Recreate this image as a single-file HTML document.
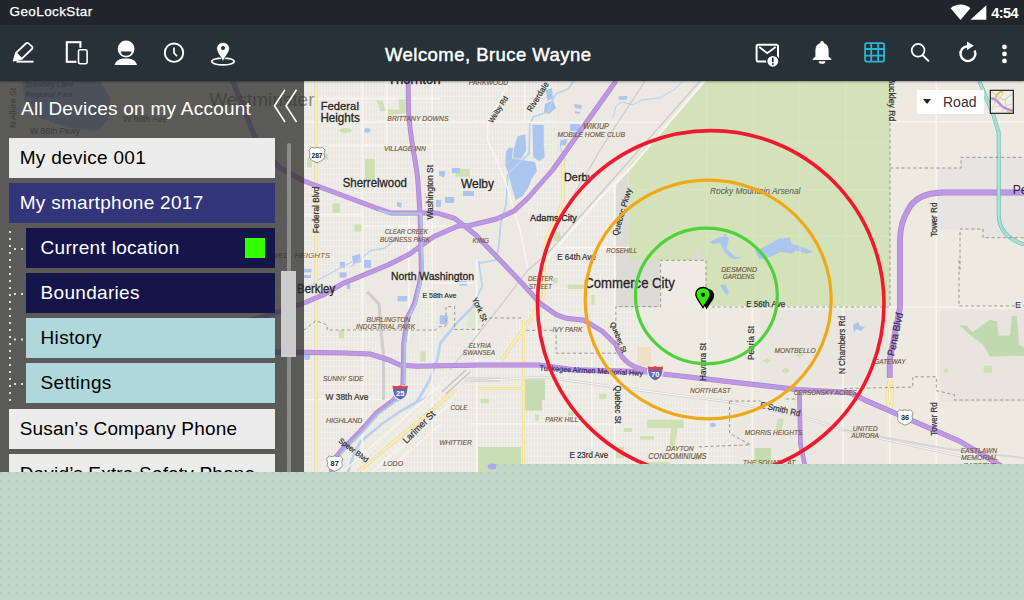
<!DOCTYPE html>
<html lang="en">
<head>
<meta charset="utf-8">
<title>GeoLockStar</title>
<style>
html,body{margin:0;padding:0;}
body{width:1024px;height:600px;overflow:hidden;position:relative;background:#c2d6c7;font-family:"Liberation Sans",sans-serif;}
#map{position:absolute;left:0;top:0;width:1024px;height:472px;display:block;}
#map text{font-family:"Liberation Sans",sans-serif;}
#bottom{position:absolute;left:0;top:464px;width:1024px;height:136px;display:block;}
#statusbar{position:absolute;left:0;top:0;width:1024px;height:25px;background:#1f2529;color:#fff;}
#statusbar .app{position:absolute;left:9.6px;top:4px;font-size:13.5px;line-height:16px;letter-spacing:0.38px;-webkit-text-stroke:0.25px #fff;}
#statusbar .time{position:absolute;right:6px;top:5px;font-size:14.5px;line-height:17px;font-weight:bold;letter-spacing:-0.55px;}
#actionbar{position:absolute;left:0;top:25px;width:1024px;height:56px;background:#263238;color:#fff;box-shadow:0 1px 2px rgba(0,0,0,0.35);}
#actionbar .title{position:absolute;left:0;width:976.5px;top:19px;text-align:center;font-size:18.5px;line-height:22px;-webkit-text-stroke:0.45px #fff;letter-spacing:0.45px;}
#actionbar svg{position:absolute;display:block;}
#sidebar{position:absolute;left:0;top:81px;width:304px;height:391px;background:rgba(45,45,45,0.76);overflow:hidden;}
#sidebar .hdr{position:absolute;left:21px;top:16.5px;font-size:19px;line-height:22px;color:#fff;white-space:nowrap;letter-spacing:0.25px;}
.item{position:absolute;left:9px;width:266px;height:39.6px;font-size:19px;line-height:39px;white-space:nowrap;overflow:hidden;letter-spacing:0.3px;}
.item span{position:absolute;left:10.7px;top:0px;}
.item.sub{left:26px;width:249px;}
.item.sub span{left:14.6px;}
.lt{background:#ececec;color:#000;}
.sel{background:#33357a;color:#fff;}
.navy{background:#15154a;color:#fff;}
.teal{background:#aed8da;color:#000;}
.sq{position:absolute;left:219px;top:10px;width:20px;height:20px;background:#33ff00;}
#track{position:absolute;left:287px;top:62px;width:4px;height:340px;background:#8c8c8c;border-radius:2px 2px 0 0;}
#thumb{position:absolute;left:281px;top:190px;width:15px;height:86px;background:#cccccc;}
#sidebar svg{position:absolute;left:0;top:0;}
#roadsel{position:absolute;left:917px;top:90px;width:67px;height:24px;background:#fff;color:#333;font-size:14px;line-height:24px;}
#roadsel span{position:absolute;left:26px;top:0;}
#roadsel i{position:absolute;left:6px;top:9px;width:0;height:0;border-left:4.6px solid transparent;border-right:4.6px solid transparent;border-top:5.2px solid #222;}
</style>
</head>
<body>
<svg id="map" viewBox="0 0 1024 472">
<rect x="0" y="0" width="1024" height="472" fill="#edeae2"/>
<defs>
<pattern id="grid" x="0" y="0" width="3" height="6" patternUnits="userSpaceOnUse">
<rect width="3" height="6" fill="#ebe8e1"/>
<rect x="0" y="0" width="3" height="1" fill="#f0eee8"/>
<rect x="0" y="0" width="1" height="6" fill="#f0eee8"/>
</pattern>
<pattern id="gridd" x="0" y="0" width="5" height="5" patternUnits="userSpaceOnUse" patternTransform="rotate(-45 420 430)">
<rect width="5" height="5" fill="#ece9e2"/>
<rect x="0" y="0" width="5" height="1.2" fill="#f4f1e6"/>
<rect x="0" y="0" width="1.2" height="5" fill="#f4f1e6"/>
</pattern>
</defs>
<!-- urban grid texture -->
<g id="urban">
<rect x="0" y="81" width="640" height="391" fill="url(#grid)"/>
<polygon points="640,398 735,408 735,472 640,472" fill="url(#grid)"/>
<polygon points="436,200 520,200 545,255 530,300 500,345 436,345" fill="#ece9e2"/>
<polygon points="366,262 420,262 420,350 384,350 366,300" fill="#ece9e2"/>
<rect x="760" y="310" width="128" height="76" fill="#e9e6df"/>
<polygon points="556,81 706,81 629,166 600,192 575,160 556,150" fill="#ece9e2"/>
<rect x="736" y="408" width="150" height="64" fill="#ebe8e1"/>
<rect x="940" y="310" width="84" height="92" fill="#e8e5de"/>
<polygon points="350,472 400,415 440,380 475,372 455,396 425,426 395,472" fill="url(#gridd)"/>
<rect x="637" y="347" width="14" height="19" fill="#f0dfc6"/>
</g>
<!-- landuse -->
<g id="landuse">
<polygon points="706,81 890,81 890,306 706,306 706,260 629,260 629,166" fill="#d4e2b9"/>
<polygon points="616,186 628.5,171 629,260 660,260 660,307 616,307" fill="#dddbd6"/>
<polygon points="690,260 697,250 704,260" fill="#dddbd6"/>
<rect x="660.5" y="260.5" width="45.5" height="46" fill="#eeebe4"/>
<polygon points="937,168 961,168 961,157 1024,157 1024,238 983,238 983,229 937,229" fill="#e7e5e1"/>
<rect x="890" y="81" width="134" height="226" fill="#eeebe5" opacity="0.0"/>
</g>
<g id="parks" fill="#cfe0b3">
<polygon points="376.5,100.2 382.6,101 385.3,110.8 380.9,111.6"/>
<polygon points="398.4,97.6 405.5,97.6 405.5,113.4 387.9,115.2 387.9,109 399.3,109.9"/>
<ellipse cx="345.7" cy="130.5" rx="6.2" ry="2.4"/>
<rect x="365" y="159" width="10" height="21"/>
<rect x="455.6" y="168.8" width="14" height="8"/>
<rect x="307" y="157.3" width="5" height="10"/><rect x="322.9" y="153.8" width="5" height="6.2"/>
<rect x="332.5" y="203.4" width="7.5" height="9.6"/>
<rect x="354.5" y="224.5" width="7" height="7"/>
<rect x="339" y="330.3" width="5" height="8"/>
<rect x="420.4" y="351.4" width="5.3" height="10"/>
<polygon points="468.7,312.7 480,306 484,318 474,330 466,326" fill="#dde8d0"/>
<rect x="553.5" y="231.5" width="7" height="9.7"/>
<rect x="567.6" y="284.6" width="17.4" height="4.4"/>
<rect x="591.3" y="295" width="3.2" height="9.8"/>
<ellipse cx="555.3" cy="280.6" rx="2.7" ry="3"/>
<polygon points="525.2,379.2 545,379.2 545,400 541.9,400 541.9,410.4 525.2,410.4" fill="#c5dbb0"/>
<polygon points="478.3,446.9 521,446.9 521,472 478.3,472" fill="#c9deb4"/>
<rect x="480.4" y="399" width="8.4" height="4"/><rect x="535" y="414.6" width="3.8" height="6.2"/><rect x="599.2" y="393.75" width="7.3" height="5.3"/><rect x="567.9" y="411.5" width="5.2" height="4.1"/><rect x="615.8" y="446.9" width="8.4" height="11.4"/><rect x="624" y="428" width="8" height="4"/>
<polygon points="647.3,419.8 683.75,419.8 683.75,428 677.5,428 674.4,448 669,448 671,428 647.3,428"/>
<rect x="754.6" y="448" width="16.4" height="24" fill="#c5dbb0"/>
<polygon points="767,357.5 771,360.4 767,363.5 763,360.4"/><polygon points="785.8,367.5 790,370.8 785.8,374 781.6,370.8"/><polygon points="800,352 804,355 800,358 796,355"/>
<polygon points="777.5,418.75 783.75,418.75 781.7,430 775.4,430"/>
<polygon points="959,325 967,326 972.3,332 990,319.8 997,321.5 998.7,335.6 1010,335.6 1011.9,316.2 1017,316 1018.9,344.4 1024,347 1024,356 1012.7,355.8 990,356.7 982.9,344.4 970.6,335.6" fill="#c1d9af"/>
<rect x="983.6" y="365.6" width="8.4" height="7.4"/><rect x="944" y="368.75" width="4" height="3.5"/>
<rect x="640" y="436" width="14" height="3.5"/><rect x="640" y="462" width="30" height="4"/>
<rect x="694" y="455" width="6" height="5"/>
</g>

<g id="water" fill="#abc6ee">
<polygon points="546,90 552,88 553,98 547,101"/>
<polygon points="545,104 553,100 556,108 549,114 544,112"/>
<polygon points="532.4,124.8 543.8,124.8 543.8,145 544.7,157.3 539.4,160.9 533.3,157.3"/>
<polygon points="517.5,136.2 525.4,134.5 526.2,150.3 521,159.1 513,157.3 514,148.5"/>
<polygon points="508.7,147.7 513,148 512,159 505.2,164.4 506,152"/>
<polygon points="505,165 513,158 522,160 535,162 537,171 531.5,179 528,188 522.7,196 515.7,200 512,188 508,172"/>
<polygon points="574,104 582,105 581,109 575,108"/>
<polygon points="575,111 580,112 579,114 575,113"/>
<polygon points="570.2,124 579.9,124 580,131 570,131"/>
<polygon points="560.5,139.8 567.6,139 566,145 560,146"/>
<polygon points="618.5,96.2 627.3,96 627,99.5 619,100"/>
<polygon points="709.4,241.9 721.3,236.5 725.6,233.2 728.9,238.7 726.7,248.4 735.4,257 741.9,257 735.4,259.3 731,258.2 723.4,250.6 720.2,243 712.6,244"/>
<polygon points="754.9,250.6 765.7,246.2 778.7,238.7 789.5,237.6 791.7,244 800.4,246.2 813.4,251.7 806.9,253.8 796,250.6 791.7,253.8 780.9,251.7 770,257 759.2,259.3"/>
<polygon points="720.2,285.3 725.6,284.2 728.9,292.9 726.7,295 722.4,289.6"/>
<polygon points="853,325 858,322 860,326 865,327 861,331 857,329 854,332"/>
<polygon points="397,202 402,203 401,208 397,206"/>
<rect x="436" y="200" width="5" height="7"/><rect x="445" y="197" width="9" height="6"/><rect x="463" y="191" width="11" height="5"/><rect x="439" y="171" width="6" height="5"/><rect x="452" y="168" width="8" height="5"/>
<polygon points="352,256 360,254 361,262 353,264"/><rect x="364" y="260" width="7" height="8"/><rect x="340" y="262" width="5" height="6"/>
<rect x="303.5" y="268.8" width="8" height="3.5"/><rect x="304" y="275" width="7" height="3"/><rect x="339.5" y="272.3" width="7" height="5.3"/><rect x="346.6" y="283.7" width="3.5" height="5.3"/><rect x="365" y="261.8" width="4.4" height="6"/><rect x="397.6" y="296" width="9.6" height="5.3"/><rect x="459" y="281" width="8" height="4.5"/><rect x="439.7" y="315.4" width="8" height="8.8"/>
<rect x="364.2" y="128.3" width="6" height="4.4" rx="2"/><rect x="440.6" y="171.4" width="4.5" height="5.5" rx="2"/>
<rect x="709.8" y="423" width="6.2" height="4" rx="2"/>
<ellipse cx="492.5" cy="466.5" rx="5" ry="3" fill="#a9a9f0"/>
<rect x="304" y="352" width="6" height="8" rx="2"/>
</g>
<g id="river" fill="none" stroke="#b9d0f0" stroke-width="1.7" stroke-linejoin="round">
<path d="M573.7,81 L568.4,88.8 L556,94 L550.9,102.9 L549,111.6 L533.3,117 L529.8,124 L529,153.8 L510.4,171.4 L507.8,175 L506,205 L500.8,222.7 L499,243.8 L496.4,259.6 L480.5,263 L478.8,262 L482.3,286.4 L475.3,300.4 L470,311"/>
<path d="M475.8,304 L458.2,321.5 L440.6,342.6 L437.1,360 L429.2,381 L416.7,402 L400,411.5 L383.3,423 L360.4,441.7 L354,454 L348,472" stroke-width="2.6"/>
<path d="M400,411.5 L433.3,393.75"/>
<path d="M351,266.7 L370.3,250.9 L384.4,248.2 L398.4,236.8" stroke-width="1.2"/>
<path d="M304,290 L318,280 L340,268 L352,262" stroke-width="1.2"/>
<path d="M683,81 L675,89 L660,98 L642,100 L633,105 L622,102 L616,106 L613,118" stroke-width="1"/>
<path d="M560,146 L565,160 L562,170" stroke-width="1"/>
</g>
<polygon points="22,81 100,81 110,98 109,118 98,131 70,128 40,118 25,105" fill="#a9c5ee"/>

<g id="minor" fill="none" stroke="#f8f6ee" stroke-width="1.6">
<path d="M362.4,81 V472 M386.7,81 V145 M409,213 V340 M432.2,81 V472 M476.7,260 V472 M524.8,81 V122 M591.9,350 V472 M614.5,185 V472 M706.75,307 V472 M752.4,307 V472 M843,307 V472 M889.8,378 V472 M936.3,81 V472"/>
<path d="M304,98.5 H440 M304,122.2 H660 M304,145.4 H432 M304,214.5 H362 M362,226 H470 M706,307 H1024 M470,424 H620 M545,247.6 H629 M304,399.5 H400 M432,283 H476 M890,121.8 H1024"/>
<path d="M704.5,81 L627,172 L600,198 L560,244 L540,268" stroke-width="2"/>
<path d="M707,81 V260 M754,81 V306 M800,81 V306 M846,81 V306 M650,144 H890 M630,190 H890 M706,236 H890" stroke="#dbe7c4" stroke-width="0.8"/>
<path d="M372,472 L450,404 M345,470 L440,386 M386,472 L441,424" stroke-width="1.4"/>
<path d="M510,81 L487.6,122 L487.6,140 L505,180 L520,230 L528,270"/>
</g>
<g id="arterial" fill="none" stroke-linejoin="round">
<g stroke="#e9d89a" stroke-width="3.2">
<path d="M316.2,81 V472"/>
<path d="M563,160 L563,200 L558,214 L545.6,240 L543.8,270 L543.8,295 L531.5,318 L501.6,360"/>
<path d="M523.6,320 V472 M478,388.5 H523"/>
<path d="M358,472 L455.6,390"/>
<path d="M889.8,380 C886.4,388 886.4,400 889.4,410 M889.8,380 C893.2,388 893.2,400 890.2,410"/>
</g>
<g stroke="#fbf0b4" stroke-width="1.9">
<path d="M316.2,81 V472"/>
<path d="M563,160 L563,200 L558,214 L545.6,240 L543.8,270 L543.8,295 L531.5,318 L501.6,360"/>
<path d="M523.6,320 V472 M478,388.5 H523"/>
<path d="M358,472 L455.6,390"/>
<path d="M889.8,380 C886.4,388 886.4,400 889.4,410 M889.8,380 C893.2,388 893.2,400 890.2,410"/>
</g>
</g>

<g id="rail" fill="none" stroke="#cbc9ca" stroke-width="1.2">
<path d="M645,81 L600,150 L591,166 L570,200"/>
<path d="M700,81 L600,194 L547,254 L528,270 L505,300 L450,370"/>
<path d="M367,291.6 L379,304 L381,330 L383.5,355 L383.5,400" stroke-width="3" stroke="#cfcdcd"/>
<path d="M470,381 L543,377 L650,391.7 L729.6,402 L802.5,416.7 L850,432 L1024,470" stroke="#d2d0cf" stroke-width="2.4"/>
<path d="M470,381 L543,377 L650,391.7 L729.6,402 L802.5,416.7 L850,432 L1024,470" stroke="#f7f5f0" stroke-width="1.2"/>
<path d="M844,430 L948,449 L1024,458" stroke="#d8d6d2" stroke-width="2"/>
<path d="M442,392 L466,370 M446,394 L470,372" stroke="#c6c5ca" stroke-width="1.6"/>
<path d="M462,378 H500 M464,381 H500" stroke="#d0cfd2" stroke-width="1"/>
</g>

<g id="hwy" fill="none" stroke-linejoin="round" stroke-linecap="butt">
<g stroke="#a883cf">
<path d="M408.1,81 L408.5,110 C410,140 416,160 417.8,180 L420,213 L421.3,270 L419.5,283 L414.3,304 L407.2,318 L403.7,344 L403,384 L400.4,391 L393.7,400 L377,412.5 L358.3,433.3 L341.7,450 L335.4,458 L331,472" stroke-width="4.9"/>
<path d="M231.6,78 L246.4,115.6 L258,145 L280,168 L304,181 L375.6,207.8 L391.4,213 L437,213 L454.7,218.3 L475.8,235 L499.9,260 L522.7,284 L540.3,303.6 L556,314.6 L566,318.3 L584.3,320.3 L602,331 L615.9,344.4 C620,357 628,365 640,368.5 L652,372" stroke-width="4.9"/>
<path d="M615.9,81 L552.6,170 L528,198 L514,211 L496.4,219 L470,225.4 L458,226 L433.6,236.8 L409,254.4 L388,265 L370.3,272.3 L344,282.9 L322.9,295 L304,303 L260,318 L200,330" stroke-width="4.9"/>
<path d="M200,351 L304,352.3 L344,353 L370,354 L387.5,359.4 L400,365 L416.7,366.25 L480,365 L538.75,365 L574,369.8 L615.8,370.8 L650,372 L663,374 L752.5,384.4 L798.3,389.6 L850,392.7 L864.8,400 L912.75,420.8 L960.7,441.7 L998,464 L1010,472" stroke-width="5.2"/>
<path d="M799.4,390 L800.4,443.75 L804.6,464 L806,472" stroke-width="4.6"/>
<path d="M1024,192.5 L942.4,192.5 C925,193 914,198 908,210 C902,220 900,228 900,240 L900,307.5 L889.7,360 L889.8,378" stroke-width="5.8"/>
</g>
<g stroke="#be98e2">
<path d="M408.1,81 L408.5,110 C410,140 416,160 417.8,180 L420,213 L421.3,270 L419.5,283 L414.3,304 L407.2,318 L403.7,344 L403,384 L400.4,391 L393.7,400 L377,412.5 L358.3,433.3 L341.7,450 L335.4,458 L331,472" stroke-width="3.6"/>
<path d="M231.6,78 L246.4,115.6 L258,145 L280,168 L304,181 L375.6,207.8 L391.4,213 L437,213 L454.7,218.3 L475.8,235 L499.9,260 L522.7,284 L540.3,303.6 L556,314.6 L566,318.3 L584.3,320.3 L602,331 L615.9,344.4 C620,357 628,365 640,368.5 L652,372" stroke-width="3.6"/>
<path d="M615.9,81 L552.6,170 L528,198 L514,211 L496.4,219 L470,225.4 L458,226 L433.6,236.8 L409,254.4 L388,265 L370.3,272.3 L344,282.9 L322.9,295 L304,303 L260,318 L200,330" stroke-width="3.6"/>
<path d="M200,351 L304,352.3 L344,353 L370,354 L387.5,359.4 L400,365 L416.7,366.25 L480,365 L538.75,365 L574,369.8 L615.8,370.8 L650,372 L663,374 L752.5,384.4 L798.3,389.6 L850,392.7 L864.8,400 L912.75,420.8 L960.7,441.7 L998,464 L1010,472" stroke-width="4"/>
<path d="M799.4,390 L800.4,443.75 L804.6,464 L806,472" stroke-width="3.4"/>
<path d="M1024,192.5 L942.4,192.5 C925,193 914,198 908,210 C902,220 900,228 900,240 L900,307.5 L889.7,360 L889.8,378" stroke-width="4.4"/>
</g>
<!-- teal HOV / toll -->
<path d="M378,210.6 L391.4,213.6 L421,213.6 L422.5,270 L420.7,283 L415.5,304 L408.4,318 L404.9,344 L404.4,384" stroke="#a6cbe0" stroke-width="2"/>
<path d="M404.4,398 L395.2,401.5 L378.5,414 L359.8,434.8 L343.2,451.5 L337,459.5" stroke="#a6cbe0" stroke-width="2"/>
<path d="M979.3,81 L993.4,115 L998.7,132.7 L998.7,214 C999,228 1005,238 1024,244.7" stroke="#74bdb0" stroke-width="4"/>
<path d="M979.3,81 L993.4,115 L998.7,132.7 L998.7,214 C999,228 1005,238 1024,244.7" stroke="#a6e3d6" stroke-width="2.6"/>
</g>

<g id="dash" fill="none" stroke="#8f8e88" stroke-width="0.9" stroke-dasharray="3.2 2.6">
<path d="M304,330 L315.8,320.6 L327.2,325 L327.2,330 L435.4,330 L438.9,326.8 L445.9,326 L445.9,306.6 L454.7,306.6 L454.7,329.4 L480,329.4 L487.6,318 L522.7,318"/>
<path d="M526.2,330.3 L556.1,330.3 L556.1,353.2 L615.9,353.2 L615.9,306.6 L660.6,306.6 L660.6,260.3 L706,260.3 L706,307 L890,307 L890,81"/>
<path d="M844,307 M959,260 L959,306 L1024,306"/>
<path d="M890,168 L961,168 L961,157.3 L1024,157.3"/>
<path d="M960,270 L960,229 L983,229 L983,237.7 L1024,237.7"/>
<path d="M729.6,401 L760.8,401 M729.6,401 L729.6,433.3 L750.4,444.8 L696.25,446.9 M785.8,399 L798.3,399"/>
<path d="M844,388.5 L912.75,387 L912.75,376.8 L936.3,376.8 L936.3,390.6 L954.4,394.8 L954.4,400 L1024,400"/>
</g>

<g id="labels">
<text x="414.2" y="83.9" font-size="13.83" textLength="52.7" lengthAdjust="spacingAndGlyphs" text-anchor="middle" stroke="#262626" stroke-width="0.3" fill="#262626">Thornton</text>
<text x="339.8" y="109.9" font-size="11.83" textLength="38.2" lengthAdjust="spacingAndGlyphs" text-anchor="middle" stroke="#262626" stroke-width="0.3" fill="#262626">Federal</text>
<text x="340.1" y="122.2" font-size="12.20" textLength="39.4" lengthAdjust="spacingAndGlyphs" text-anchor="middle" stroke="#262626" stroke-width="0.3" fill="#262626">Heights</text>
<text x="417.9" y="120.8" font-size="7.77" textLength="61.1" lengthAdjust="spacingAndGlyphs" font-style="italic" text-anchor="middle" stroke="#73573d" stroke-width="0.15" fill="#73573d">BRITTANY DOWNS</text>
<text x="404.9" y="150.7" font-size="7.74" textLength="41.9" lengthAdjust="spacingAndGlyphs" font-style="italic" text-anchor="middle" stroke="#73573d" stroke-width="0.15" fill="#73573d">VILLAGE INN</text>
<text x="374.8" y="186.7" font-size="12.01" textLength="64.2" lengthAdjust="spacingAndGlyphs" text-anchor="middle" stroke="#262626" stroke-width="0.3" fill="#262626">Sherrelwood</text>
<text x="477.5" y="188.3" font-size="12.55" textLength="33.0" lengthAdjust="spacingAndGlyphs" text-anchor="middle" stroke="#262626" stroke-width="0.3" fill="#262626">Welby</text>
<text x="406.4" y="234.2" font-size="6.96" textLength="43.1" lengthAdjust="spacingAndGlyphs" font-style="italic" text-anchor="middle" stroke="#73573d" stroke-width="0.15" fill="#73573d">CLEAR CREEK</text>
<text x="405.0" y="241.5" font-size="7.14" textLength="50.0" lengthAdjust="spacingAndGlyphs" font-style="italic" text-anchor="middle" stroke="#73573d" stroke-width="0.15" fill="#73573d">BUSINESS PARK</text>
<text x="480.8" y="243.0" font-size="7.65" textLength="16.4" lengthAdjust="spacingAndGlyphs" font-style="italic" text-anchor="middle" stroke="#73573d" stroke-width="0.15" fill="#73573d">KING</text>
<text x="316.1" y="292.5" font-size="12.03" textLength="38.2" lengthAdjust="spacingAndGlyphs" text-anchor="middle" stroke="#262626" stroke-width="0.3" fill="#262626">Berkley</text>
<text x="432.5" y="280.2" font-size="10.94" textLength="83.0" lengthAdjust="spacingAndGlyphs" text-anchor="middle" stroke="#262626" stroke-width="0.3" fill="#262626">North Washington</text>
<text x="439.4" y="297.8" font-size="7.46" textLength="33.9" lengthAdjust="spacingAndGlyphs" text-anchor="middle" stroke="#2e2e2e" stroke-width="0.2" fill="#2e2e2e">E 58th Ave</text>
<text x="388.4" y="321.9" font-size="7.67" textLength="44.0" lengthAdjust="spacingAndGlyphs" font-style="italic" text-anchor="middle" stroke="#73573d" stroke-width="0.15" fill="#73573d">BURLINGTON</text>
<text x="385.5" y="328.9" font-size="7.62" textLength="59.2" lengthAdjust="spacingAndGlyphs" font-style="italic" text-anchor="middle" stroke="#73573d" stroke-width="0.15" fill="#73573d">INDUSTRIAL PARK</text>
<text x="479.9" y="348.0" font-size="7.30" textLength="22.2" lengthAdjust="spacingAndGlyphs" font-style="italic" text-anchor="middle" stroke="#73573d" stroke-width="0.15" fill="#73573d">ELYRIA</text>
<text x="479.0" y="355.4" font-size="7.39" textLength="32.3" lengthAdjust="spacingAndGlyphs" font-style="italic" text-anchor="middle" stroke="#73573d" stroke-width="0.15" fill="#73573d">SWANSEA</text>
<text x="343.2" y="381.2" font-size="7.59" textLength="40.6" lengthAdjust="spacingAndGlyphs" font-style="italic" text-anchor="middle" stroke="#73573d" stroke-width="0.15" fill="#73573d">SUNNY SIDE</text>
<text x="346.9" y="399.6" font-size="8.92" textLength="42.9" lengthAdjust="spacingAndGlyphs" text-anchor="middle" stroke="#2e2e2e" stroke-width="0.2" fill="#2e2e2e">W 38th Ave</text>
<text x="344.2" y="423.3" font-size="8.05" textLength="36.5" lengthAdjust="spacingAndGlyphs" font-style="italic" text-anchor="middle" stroke="#73573d" stroke-width="0.15" fill="#73573d">HIGHLAND</text>
<text x="458.9" y="409.8" font-size="7.07" textLength="16.9" lengthAdjust="spacingAndGlyphs" font-style="italic" text-anchor="middle" stroke="#73573d" stroke-width="0.15" fill="#73573d">COLE</text>
<text x="455.5" y="444.8" font-size="7.71" textLength="32.7" lengthAdjust="spacingAndGlyphs" font-style="italic" text-anchor="middle" stroke="#73573d" stroke-width="0.15" fill="#73573d">WHITTIER</text>
<text x="393.2" y="465.6" font-size="7.96" textLength="19.8" lengthAdjust="spacingAndGlyphs" font-style="italic" text-anchor="middle" stroke="#73573d" stroke-width="0.15" fill="#73573d">LODO</text>
<text x="488.4" y="85.3" font-size="7.61" textLength="39.2" lengthAdjust="spacingAndGlyphs" font-style="italic" text-anchor="middle" stroke="#73573d" stroke-width="0.15" fill="#73573d">PARKWOOD</text>
<text x="596.1" y="129.2" font-size="8.18" textLength="25.5" lengthAdjust="spacingAndGlyphs" font-style="italic" text-anchor="middle" stroke="#73573d" stroke-width="0.15" fill="#73573d">WIKIUP</text>
<text x="591.2" y="137.1" font-size="7.70" textLength="67.6" lengthAdjust="spacingAndGlyphs" font-style="italic" text-anchor="middle" stroke="#73573d" stroke-width="0.15" fill="#73573d">MOBILE HOME CLUB</text>
<text x="578.5" y="181.4" font-size="11.42" textLength="29.0" lengthAdjust="spacingAndGlyphs" text-anchor="middle" stroke="#262626" stroke-width="0.3" fill="#262626">Derby</text>
<text x="553.5" y="220.6" font-size="9.61" textLength="46.8" lengthAdjust="spacingAndGlyphs" text-anchor="middle" stroke="#262626" stroke-width="0.3" fill="#262626">Adams City</text>
<text x="576.5" y="260.0" font-size="8.43" textLength="38.3" lengthAdjust="spacingAndGlyphs" text-anchor="middle" stroke="#2e2e2e" stroke-width="0.2" fill="#2e2e2e">E 64th Ave</text>
<text x="621.6" y="253.0" font-size="7.10" textLength="30.8" lengthAdjust="spacingAndGlyphs" font-style="italic" text-anchor="middle" stroke="#73573d" stroke-width="0.15" fill="#73573d">ROSEHILL</text>
<text x="540.5" y="281.1" font-size="7.03" textLength="25.0" lengthAdjust="spacingAndGlyphs" font-style="italic" text-anchor="middle" stroke="#73573d" stroke-width="0.15" fill="#73573d">DEXTER</text>
<text x="540.3" y="288.5" font-size="6.59" textLength="22.8" lengthAdjust="spacingAndGlyphs" font-style="italic" text-anchor="middle" stroke="#73573d" stroke-width="0.15" fill="#73573d">STREET</text>
<text x="567.5" y="332.4" font-size="7.54" textLength="29.9" lengthAdjust="spacingAndGlyphs" font-style="italic" text-anchor="middle" stroke="#73573d" stroke-width="0.15" fill="#73573d">IVY PARK</text>
<text x="629.5" y="288.1" font-size="13.78" textLength="90.4" lengthAdjust="spacingAndGlyphs" text-anchor="middle" stroke="#262626" stroke-width="0.3" fill="#262626">Commerce City</text>
<text x="561.8" y="421.9" font-size="7.44" textLength="32.9" lengthAdjust="spacingAndGlyphs" font-style="italic" text-anchor="middle" stroke="#73573d" stroke-width="0.15" fill="#73573d">PARK HILL</text>
<text x="588.8" y="458.3" font-size="8.42" textLength="38.7" lengthAdjust="spacingAndGlyphs" text-anchor="middle" stroke="#2e2e2e" stroke-width="0.2" fill="#2e2e2e">E 23rd Ave</text>
<text x="739.1" y="271.6" font-size="7.96" textLength="35.7" lengthAdjust="spacingAndGlyphs" font-style="italic" text-anchor="middle" stroke="#73573d" stroke-width="0.15" fill="#73573d">DESMOND</text>
<text x="738.6" y="278.8" font-size="7.28" textLength="31.6" lengthAdjust="spacingAndGlyphs" font-style="italic" text-anchor="middle" stroke="#73573d" stroke-width="0.15" fill="#73573d">GARDENS</text>
<text x="765.7" y="307.4" font-size="8.58" textLength="39.0" lengthAdjust="spacingAndGlyphs" text-anchor="middle" stroke="#2e2e2e" stroke-width="0.2" fill="#2e2e2e">E 56th Ave</text>
<text x="795.0" y="352.9" font-size="7.62" textLength="41.2" lengthAdjust="spacingAndGlyphs" font-style="italic" text-anchor="middle" stroke="#73573d" stroke-width="0.15" fill="#73573d">MONTBELLO</text>
<text x="755.2" y="193.6" font-size="9.22" textLength="90.5" lengthAdjust="spacingAndGlyphs" font-style="italic" text-anchor="middle" stroke="#5f6360" stroke-width="0.1" fill="#5f6360">Rocky Mountain Arsenal</text>
<text x="710.3" y="393.1" font-size="7.53" textLength="40.6" lengthAdjust="spacingAndGlyphs" font-style="italic" text-anchor="middle" stroke="#73573d" stroke-width="0.15" fill="#73573d">NORTHEAST</text>
<text x="773.6" y="435.4" font-size="7.54" textLength="57.7" lengthAdjust="spacingAndGlyphs" font-style="italic" text-anchor="middle" stroke="#73573d" stroke-width="0.15" fill="#73573d">MORRIS HEIGHTS</text>
<text x="679.9" y="451.0" font-size="7.76" textLength="27.8" lengthAdjust="spacingAndGlyphs" font-style="italic" text-anchor="middle" stroke="#73573d" stroke-width="0.15" fill="#73573d">DAYTON</text>
<text x="677.5" y="458.8" font-size="8.27" textLength="58.4" lengthAdjust="spacingAndGlyphs" font-style="italic" text-anchor="middle" stroke="#73573d" stroke-width="0.15" fill="#73573d">CONDOMINIUMS</text>
<text x="769.1" y="465.0" font-size="7.49" textLength="52.2" lengthAdjust="spacingAndGlyphs" font-style="italic" text-anchor="middle" stroke="#73573d" stroke-width="0.15" fill="#73573d">THE SQUARE AT</text>
<text x="825.2" y="394.9" font-size="7.22" textLength="63.0" lengthAdjust="spacingAndGlyphs" font-style="italic" text-anchor="middle" stroke="#73573d" stroke-width="0.15" fill="#73573d">CERSONSKY ACRES</text>
<text x="889.9" y="363.7" font-size="7.36" textLength="31.2" lengthAdjust="spacingAndGlyphs" font-style="italic" text-anchor="middle" stroke="#73573d" stroke-width="0.15" fill="#73573d">GATEWAY</text>
<text x="865.2" y="430.8" font-size="7.66" textLength="25.0" lengthAdjust="spacingAndGlyphs" font-style="italic" text-anchor="middle" stroke="#73573d" stroke-width="0.15" fill="#73573d">UNITED</text>
<text x="865.1" y="438.1" font-size="7.38" textLength="27.7" lengthAdjust="spacingAndGlyphs" font-style="italic" text-anchor="middle" stroke="#73573d" stroke-width="0.15" fill="#73573d">AURORA</text>
<text x="978.9" y="453.1" font-size="7.57" textLength="36.4" lengthAdjust="spacingAndGlyphs" font-style="italic" text-anchor="middle" stroke="#73573d" stroke-width="0.15" fill="#73573d">EASTLAWN</text>
<text x="979.4" y="460.4" font-size="7.85" textLength="36.8" lengthAdjust="spacingAndGlyphs" font-style="italic" text-anchor="middle" stroke="#73573d" stroke-width="0.15" fill="#73573d">MEMORIAL</text>
<text x="979.5" y="467.7" font-size="7.61" textLength="33.0" lengthAdjust="spacingAndGlyphs" font-style="italic" text-anchor="middle" stroke="#73573d" stroke-width="0.15" fill="#73573d">GARDENS</text>
<text x="0.0" y="3.1" font-size="8.80" textLength="46.6" lengthAdjust="spacingAndGlyphs" text-anchor="middle" transform="translate(316.0 210.0) rotate(-90.0)" stroke="#2e2e2e" stroke-width="0.2" fill="#2e2e2e">Federal Blvd</text>
<text x="0.0" y="3.1" font-size="8.95" textLength="54.6" lengthAdjust="spacingAndGlyphs" text-anchor="middle" transform="translate(430.2 192.3) rotate(-90.0)" stroke="#2e2e2e" stroke-width="0.2" fill="#2e2e2e">Washington St</text>
<text x="0.0" y="2.9" font-size="8.36" textLength="25.1" lengthAdjust="spacingAndGlyphs" text-anchor="middle" transform="translate(479.7 309.2) rotate(65.1)" stroke="#2e2e2e" stroke-width="0.2" fill="#2e2e2e">York St</text>
<text x="0.0" y="2.7" font-size="7.58" textLength="35.0" lengthAdjust="spacingAndGlyphs" text-anchor="middle" transform="translate(353.6 450.0) rotate(36.5)" stroke="#2e2e2e" stroke-width="0.2" fill="#2e2e2e">Speer Blvd</text>
<text x="0.0" y="3.3" font-size="9.47" textLength="41.2" lengthAdjust="spacingAndGlyphs" text-anchor="middle" transform="translate(418.8 427.1) rotate(-45.1)" stroke="#2e2e2e" stroke-width="0.2" fill="#2e2e2e">Larimer St</text>
<text x="0.0" y="2.6" font-size="7.37" textLength="30.0" lengthAdjust="spacingAndGlyphs" text-anchor="middle" transform="translate(498.1 109.5) rotate(-58.2)" stroke="#2e2e2e" stroke-width="0.2" fill="#2e2e2e">Welby Rd</text>
<text x="0.0" y="2.9" font-size="8.34" textLength="33.2" lengthAdjust="spacingAndGlyphs" text-anchor="middle" transform="translate(537.7 96.7) rotate(-58.0)" stroke="#2e2e2e" stroke-width="0.2" fill="#2e2e2e">Riverdale</text>
<text x="0.0" y="2.9" font-size="8.41" textLength="48.9" lengthAdjust="spacingAndGlyphs" text-anchor="middle" transform="translate(622.0 211.9) rotate(-73.4)" stroke="#2e2e2e" stroke-width="0.2" fill="#2e2e2e">Quebec Pkwy</text>
<text x="0.0" y="2.5" font-size="7.25" textLength="32.3" lengthAdjust="spacingAndGlyphs" text-anchor="middle" transform="translate(618.5 337.4) rotate(67.6)" stroke="#2e2e2e" stroke-width="0.2" fill="#2e2e2e">Quebec St</text>
<text x="0.0" y="2.7" font-size="7.62" textLength="103.3" lengthAdjust="spacingAndGlyphs" text-anchor="middle" transform="translate(591.3 370.5) rotate(3.1)" stroke="#3b2a55" stroke-width="0.2" fill="#3b2a55">Tuskegee Airmen Memorial Hwy</text>
<text x="0.0" y="3.0" font-size="8.50" textLength="37.9" lengthAdjust="spacingAndGlyphs" text-anchor="middle" transform="translate(617.9 404.4) rotate(90.0)" stroke="#2e2e2e" stroke-width="0.2" fill="#2e2e2e">Quebec St</text>
<text x="0.0" y="3.1" font-size="8.76" textLength="34.0" lengthAdjust="spacingAndGlyphs" text-anchor="middle" transform="translate(750.5 343.0) rotate(-90.0)" stroke="#2e2e2e" stroke-width="0.2" fill="#2e2e2e">Peoria St</text>
<text x="0.0" y="3.0" font-size="8.63" textLength="38.0" lengthAdjust="spacingAndGlyphs" text-anchor="middle" transform="translate(703.0 362.0) rotate(-90.0)" stroke="#2e2e2e" stroke-width="0.2" fill="#2e2e2e">Havana St</text>
<text x="0.0" y="3.0" font-size="8.58" textLength="58.0" lengthAdjust="spacingAndGlyphs" text-anchor="middle" transform="translate(841.7 345.0) rotate(-90.0)" stroke="#2e2e2e" stroke-width="0.2" fill="#2e2e2e">N Chambers Rd</text>
<text x="0.0" y="3.0" font-size="8.59" textLength="41.0" lengthAdjust="spacingAndGlyphs" text-anchor="middle" transform="translate(780.4 409.1) rotate(12.5)" stroke="#2e2e2e" stroke-width="0.2" fill="#2e2e2e">E Smith Rd</text>
<text x="0.0" y="3.2" font-size="9.18" textLength="43.8" lengthAdjust="spacingAndGlyphs" text-anchor="middle" transform="translate(892.3 99.4) rotate(90.0)" stroke="#2e2e2e" stroke-width="0.2" fill="#2e2e2e">Buckley Rd</text>
<text x="0.0" y="3.0" font-size="8.61" textLength="34.3" lengthAdjust="spacingAndGlyphs" text-anchor="middle" transform="translate(934.0 219.7) rotate(-90.0)" stroke="#2e2e2e" stroke-width="0.2" fill="#2e2e2e">Tower Rd</text>
<text x="0.0" y="2.9" font-size="8.36" textLength="33.3" lengthAdjust="spacingAndGlyphs" text-anchor="middle" transform="translate(934.0 419.1) rotate(-90.0)" stroke="#2e2e2e" stroke-width="0.2" fill="#2e2e2e">Tower Rd</text>
<text x="0.0" y="3.6" font-size="10.23" textLength="44.0" lengthAdjust="spacingAndGlyphs" text-anchor="middle" transform="translate(895.0 334.2) rotate(-78.3)" stroke="#3b2a55" stroke-width="0.2" fill="#3b2a55">Pena Blvd</text>
<text x="314.5" y="106.4" font-size="19" text-anchor="end" fill="#8d8d8d">Westminster</text>
<text x="330.2" y="257.9" font-size="8" font-style="italic" text-anchor="end" fill="#7b5f45">LOWELL HEIGHTS</text>
<text x="1012.7" y="193.7" font-size="12" fill="#2a2040">Pena Blvd</text>
<text x="1014.9" y="307.5" font-size="9.3" fill="#3a3a3a">E 56th Ave</text>
<text x="25" y="87" font-size="7.6" font-style="italic" fill="#5f6360">Standley Lake</text>
<text x="25" y="96.5" font-size="7.6" font-style="italic" fill="#5f6360">Regional Park</text>
<text x="30" y="133.5" font-size="8.6" fill="#6a6a6a">W 86th Pkwy</text>
<text x="123" y="122" font-size="8.6" fill="#6a6a6a">W 88th Ave</text>
<text font-size="8.6" fill="#6a6a6a" text-anchor="middle" transform="translate(15.5 108) rotate(-90)">N Alkire St</text>
<path d="M311.4,147.4 Q314,148.8 317,147.4 Q320,148.8 322.6,147.4 L325,150.2 Q323.2,154 324.6,157.2 Q323.4,161 317,162.8 Q310.6,161 309.4,157.2 Q310.8,154 309,150.2 Z" fill="#fff" stroke="#8a8a8a" stroke-width="0.9"/>
<text x="317" y="157.9" font-size="6.6" font-weight="bold" text-anchor="middle" fill="#1a1a1a">287</text>
<path d="M329.09999999999997,455.9 Q331.7,457.3 334.7,455.9 Q337.7,457.3 340.3,455.9 L342.7,458.7 Q340.9,462.5 342.3,465.7 Q341.09999999999997,469.5 334.7,471.3 Q328.3,469.5 327.09999999999997,465.7 Q328.5,462.5 326.7,458.7 Z" fill="#fff" stroke="#8a8a8a" stroke-width="0.9"/>
<text x="334.7" y="466.4" font-size="7.4" font-weight="bold" text-anchor="middle" fill="#1a1a1a">87</text>
<path d="M899.5,409.79999999999995 Q902.1,411.2 905.1,409.79999999999995 Q908.1,411.2 910.7,409.79999999999995 L913.1,412.59999999999997 Q911.3000000000001,416.4 912.7,419.59999999999997 Q911.5,423.4 905.1,425.2 Q898.7,423.4 897.5,419.59999999999997 Q898.9,416.4 897.1,412.59999999999997 Z" fill="#fff" stroke="#8a8a8a" stroke-width="0.9"/>
<text x="905.1" y="420.29999999999995" font-size="7.4" font-weight="bold" text-anchor="middle" fill="#1a1a1a">36</text>
<path d="M392.8,385.4 Q396.59999999999997,387.0 400.2,385.2 Q403.8,387.0 407.59999999999997,385.4 Q408.59999999999997,390.4 407.0,394.4 Q405.2,398.4 400.2,400.2 Q395.2,398.4 393.4,394.4 Q391.8,390.4 392.8,385.4 Z" fill="#6268b6" stroke="#f4f2ee" stroke-width="1.2"/>
<path d="M392.8,385.4 Q396.59999999999997,387.0 400.2,385.2 Q403.8,387.0 407.59999999999997,385.4 L407.9,388.59999999999997 L392.5,388.59999999999997 Z" fill="#ee3d3d"/>
<text x="400.2" y="396.0" font-size="7.6" font-weight="bold" text-anchor="middle" fill="#fff">25</text>
<path d="M647.9,366.2 Q651.6999999999999,367.8 655.3,366.0 Q658.9,367.8 662.6999999999999,366.2 Q663.6999999999999,371.2 662.0999999999999,375.2 Q660.3,379.2 655.3,381.0 Q650.3,379.2 648.5,375.2 Q646.9,371.2 647.9,366.2 Z" fill="#6268b6" stroke="#f4f2ee" stroke-width="1.2"/>
<path d="M647.9,366.2 Q651.6999999999999,367.8 655.3,366.0 Q658.9,367.8 662.6999999999999,366.2 L663.0,369.4 L647.5999999999999,369.4 Z" fill="#ee3d3d"/>
<text x="655.3" y="376.8" font-size="7.6" font-weight="bold" text-anchor="middle" fill="#fff">70</text>
</g>

<g id="rings" fill="none">
<ellipse cx="710.75" cy="303.85" rx="173.25" ry="173.25" stroke="#f0192d" stroke-width="3.6"/>
<ellipse cx="708.2" cy="299.5" rx="123" ry="119.3" stroke="#f0a818" stroke-width="3.2"/>
<ellipse cx="706.4" cy="296" rx="70.9" ry="67.8" stroke="#4fd13c" stroke-width="3.2"/>
</g>
<g id="pin">
<path d="M706.6,309.4 C703.8,303.4 699.4,300 699.4,295.6 C699.4,291.4 702.8,288.8 706.8,288.8 C710.8,288.8 714.2,291.4 714.2,295.6 C714.2,300 709.6,303.4 706.6,309.4 Z" fill="#000"/>
<path d="M703,307.8 C700.2,301.8 695.8,298.4 695.8,294.2 C695.8,290 699.2,287.5 703,287.5 C706.8,287.5 710.2,290 710.2,294.2 C710.2,298.4 705.8,301.8 703,307.8 Z" fill="#30ee00" stroke="#000" stroke-width="1.3" stroke-linejoin="round"/>
<circle cx="703" cy="294.8" r="2.1" fill="#000"/>
</g>
<g id="thumb">
<rect x="990.4" y="90.4" width="23" height="23" fill="#f1efea" stroke="#2e2e2e" stroke-width="1"/>
<g transform="translate(990 90)" fill="none">
<path d="M2,2 L10,8 L14,2 M10,8 L15,10 L22,4 M15,10 L16,16 L22,14 M16,16 L12,22 M2,20 L5,12 L10,8 M5,12 L2,10 M5,17 L10,16" stroke="#d8d2c2" stroke-width="1.1"/>
<path d="M6,8 C6,4 9,2 13,1.6" stroke="#f2b828" stroke-width="1.6"/>
<path d="M17,21 L19,23" stroke="#f2b828" stroke-width="1.6"/>
<path d="M1.2,8.6 C8,8 8,14 13,17 C17,19.4 20,19.6 22.8,21" stroke="#bd8fd9" stroke-width="2.6"/>
</g>
<rect x="990.4" y="90.4" width="23" height="23" fill="none" stroke="#2e2e2e" stroke-width="1.2"/>
</g>


</svg>
<svg id="bottom" viewBox="0 464 1024 136">
<defs>
<pattern id="dots" x="0" y="0" width="8" height="8" patternUnits="userSpaceOnUse">
<rect width="8" height="8" fill="#c2d6c7"/>
<rect x="0" y="0" width="1" height="1" fill="#84cd8c"/>
<rect x="1" y="0" width="1" height="1" fill="#d9d7dc"/>
<rect x="0" y="1" width="1" height="1" fill="#d9d7dc"/>
<rect x="1" y="1" width="1" height="1" fill="#b4c6b8"/>
</pattern>
</defs>
<rect x="0" y="472" width="1024" height="128" fill="url(#dots)"/>
<rect x="496" y="464" width="528" height="8" fill="url(#dots)"/>
</svg>
<div id="sidebar">
<div class="hdr">All Devices on my Account</div>
<svg width="304" height="391" viewBox="0 81 304 391">
<polyline points="285,89.7 274.5,105.8 285,122" fill="none" stroke="#fff" stroke-width="1.6"/>
<polyline points="296.5,89.7 286,105.8 296.5,122" fill="none" stroke="#fff" stroke-width="1.6"/>
<g fill="#dcdcdc"><rect x="9" y="231" width="2" height="2"/><rect x="9" y="238" width="2" height="2"/><rect x="9" y="245" width="2" height="2"/><rect x="9" y="252" width="2" height="2"/><rect x="9" y="259" width="2" height="2"/><rect x="9" y="266" width="2" height="2"/><rect x="9" y="273" width="2" height="2"/><rect x="9" y="280" width="2" height="2"/><rect x="9" y="287" width="2" height="2"/><rect x="9" y="294" width="2" height="2"/><rect x="9" y="301" width="2" height="2"/><rect x="9" y="308" width="2" height="2"/><rect x="9" y="315" width="2" height="2"/><rect x="9" y="322" width="2" height="2"/><rect x="9" y="329" width="2" height="2"/><rect x="9" y="336" width="2" height="2"/><rect x="9" y="343" width="2" height="2"/><rect x="9" y="350" width="2" height="2"/><rect x="9" y="357" width="2" height="2"/><rect x="9" y="364" width="2" height="2"/><rect x="9" y="371" width="2" height="2"/><rect x="9" y="378" width="2" height="2"/><rect x="9" y="385" width="2" height="2"/><rect x="9" y="392" width="2" height="2"/><rect x="9" y="399" width="2" height="2"/><rect x="14" y="248" width="2" height="2"/><rect x="21" y="248" width="2" height="2"/><rect x="14" y="293" width="2" height="2"/><rect x="21" y="293" width="2" height="2"/><rect x="14" y="338.5" width="2" height="2"/><rect x="21" y="338.5" width="2" height="2"/><rect x="14" y="383" width="2" height="2"/><rect x="21" y="383" width="2" height="2"/></g>
</svg>
<div id="track"></div>
<div id="thumb"></div>
<div class="item lt" style="top:57.0px"><span>My device 001</span></div>
<div class="item sel" style="top:102.3px"><span>My smartphone 2017</span></div>
<div class="item sub navy" style="top:147.0px"><span>Current location</span><div class="sq"></div></div>
<div class="item sub navy" style="top:192.0px"><span>Boundaries</span></div>
<div class="item sub teal" style="top:237.0px"><span>History</span></div>
<div class="item sub teal" style="top:282.0px"><span>Settings</span></div>
<div class="item lt" style="top:328.0px"><span style="letter-spacing:0.16px">Susan’s Company Phone</span></div>
<div class="item lt" style="top:373.4px"><span style="letter-spacing:0.18px">David’s Extra Safety Phone</span></div>
</div>
<div id="roadsel"><i></i><span>Road</span></div>
<div id="statusbar"><div class="app">GeoLockStar</div><div class="time">4:54</div>
<svg width="60" height="25" viewBox="940 0 60 25" style="position:absolute;left:940px;top:0">
<path d="M960.5,19.9 L950.6,8.2 A15.4,15.4 0 0 1 970.4,8.2 Z" fill="#fff"/>
<path d="M970.4,19.8 H986.3 V5.2 Z" fill="#fff"/>
</svg>

</div>
<div id="actionbar"><div class="title">Welcome, Bruce Wayne</div>
<svg width="1024" height="56" viewBox="0 25 1024 56" style="left:0;top:0">
<!-- pencil -->
<g fill="none" stroke="#fff" stroke-width="1.8" stroke-linejoin="round">
<path d="M16,52.9 L25.9,43.5 Q27.2,42.3 28.5,43.4 L31.9,46.4 Q33.2,47.7 31.9,49 L21.6,58.8"/>
<path d="M16,52.9 L13.7,60.7 L21.6,58.8 Z" fill="#fff"/>
</g>
<rect x="16.5" y="60.7" width="17" height="1.9" fill="#fff"/>
<!-- devices -->
<rect x="66.8" y="42.2" width="13.6" height="19.6" fill="none" stroke="#fff" stroke-width="2.1"/>
<rect x="76.4" y="47.8" width="12.8" height="18" rx="2.4" fill="#263238"/>
<rect x="78.5" y="49.8" width="8.6" height="14" rx="1.6" fill="none" stroke="#fff" stroke-width="1.6"/>
<!-- user -->
<circle cx="126.1" cy="49" r="8.4" fill="#fff"/>
<path d="M120.6,51.6 H131.6 A5.6,5.2 0 0 1 120.6,51.6 Z" fill="#263238"/>
<path d="M114.6,64.9 C116,60.4 119.6,58.6 125.8,58.6 C132,58.6 135.6,60.4 137,64.9 Z" fill="#fff"/>
<!-- clock -->
<circle cx="174" cy="52.7" r="9.2" fill="none" stroke="#fff" stroke-width="1.9"/>
<path d="M174,47.4 V52.9 L177,56.2" fill="none" stroke="#fff" stroke-width="1.7"/>
<!-- location -->
<ellipse cx="223" cy="61.5" rx="11.2" ry="3.4" fill="none" stroke="#fff" stroke-width="1.6"/>
<path d="M223,62 C221.4,56.6 216.7,53.2 216.7,48.6 C216.7,44.8 219.6,42.5 223,42.5 C226.4,42.5 229.4,44.8 229.4,48.6 C229.4,53.2 224.6,56.6 223,62 Z" fill="#fff" stroke="#263238" stroke-width="0.8"/>
<circle cx="223" cy="48" r="2" fill="#263238"/>
<!-- mail -->
<rect x="756.6" y="44.7" width="21.4" height="16.8" rx="1.8" fill="none" stroke="#fff" stroke-width="2"/>
<path d="M759.2,47 L767.3,53.2 L775.6,47" fill="none" stroke="#fff" stroke-width="1.7"/>
<circle cx="772.8" cy="61.3" r="6.7" fill="#263238"/>
<circle cx="772.8" cy="61.3" r="5.4" fill="#fff"/>
<rect x="771.9" y="57.6" width="1.8" height="4.6" fill="#263238"/><rect x="771.9" y="63.2" width="1.8" height="1.7" fill="#263238"/>
<!-- bell -->
<path d="M822,41 C823.2,41 823.8,41.8 823.8,42.9 C827.2,44 828.6,46.8 828.6,50.4 V56.6 L831.4,59 V60 H812.7 V59 L815.4,56.6 V50.4 C815.4,46.8 816.8,44 820.2,42.9 C820.2,41.8 820.8,41 822,41 Z" fill="#fff"/>
<path d="M818.6,61.2 H825.4 A3.4,2.6 0 0 1 818.6,61.2 Z" fill="#fff"/>
<!-- grid -->
<g fill="none" stroke="#2ab5d6" stroke-width="1.8">
<rect x="865.1" y="43.1" width="19" height="18.5" rx="1.8"/>
<path d="M871.2,43.1 V61.6 M878.2,43.1 V61.6 M865.1,49 H884.1 M865.1,55.6 H884.1"/>
</g>
<!-- search -->
<circle cx="918.1" cy="50.3" r="6.4" fill="none" stroke="#fff" stroke-width="1.7"/>
<path d="M922.4,55 L928.9,61.4" stroke="#fff" stroke-width="1.9"/>
<!-- refresh -->
<path d="M967.4,46.2 A7.4,7.4 0 1 0 974.6,50.4" fill="none" stroke="#fff" stroke-width="2.4"/>
<path d="M967,41.4 L973.8,45.8 L967,50.1 Z" fill="#fff"/>
<!-- more -->
<circle cx="1004.5" cy="47" r="2.4" fill="#fff"/><circle cx="1004.5" cy="53.9" r="2.4" fill="#fff"/><circle cx="1004.5" cy="60.9" r="2.4" fill="#fff"/>
</svg>

</div>
</body>
</html>
